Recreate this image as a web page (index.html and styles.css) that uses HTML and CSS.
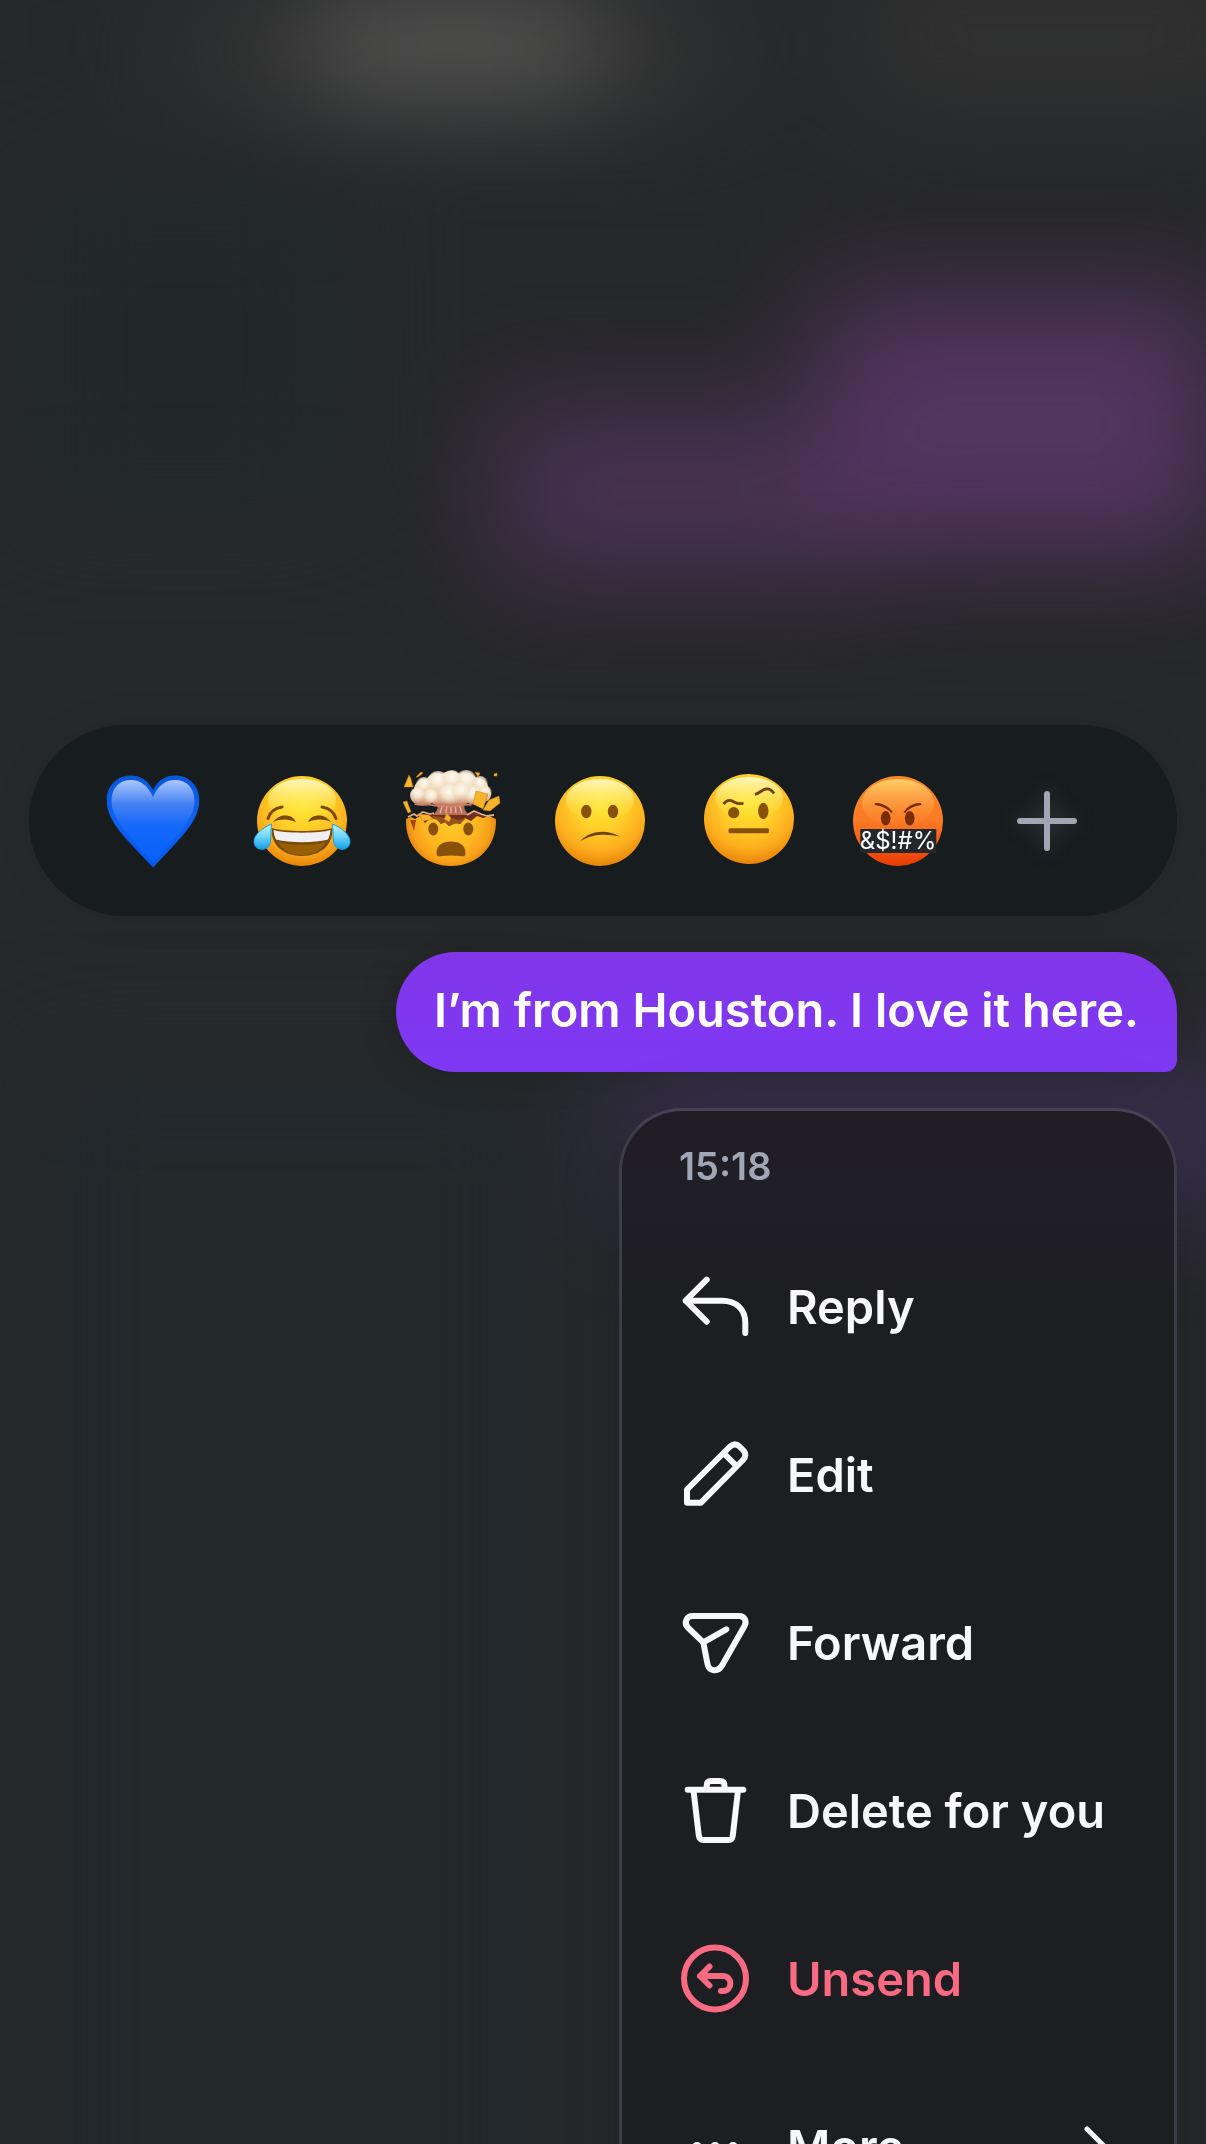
FILE: index.html
```html
<!DOCTYPE html>
<html lang="en">
<head>
    <meta charset="UTF-8">
    <meta name="viewport" content="width=device-width, initial-scale=1.0">
    <title>Message actions</title>
    <link rel="stylesheet" href="styles.css">
</head>
<body>
    <!-- Blurred chat behind the menu -->
    <svg class="backdrop" viewBox="0 0 1206 2144" preserveAspectRatio="none" aria-hidden="true">
        <defs>
            <filter id="soft" filterUnits="userSpaceOnUse" x="-300" y="-300" width="1806" height="2744" color-interpolation-filters="sRGB">
                <feGaussianBlur stdDeviation="54"/>
            </filter>
        </defs>
        <g filter="url(#soft)">
            <rect x="20" y="180" width="330" height="330" fill="#22282a"/>
            <rect x="30" y="1060" width="520" height="1300" fill="#23282b"/>
            <rect x="160" y="0" width="580" height="100" fill="#323232"/>
            <rect x="310" y="-10" width="290" height="110" fill="#575755"/>
            <rect x="860" y="-40" width="400" height="150" fill="#313131"/>
            <rect x="500" y="412" width="370" height="160" fill="#493254"/>
            <rect x="825" y="300" width="390" height="250" fill="#543461"/>
            <rect x="620" y="1070" width="640" height="130" fill="#3a3154"/>
        </g>
    </svg>

    <!-- Gradients shared by the emoji -->
    <svg class="defs" width="0" height="0" aria-hidden="true">
        <defs>
            <radialGradient id="face" cx="0.5" cy="0.3" r="0.7">
                <stop offset="0" stop-color="#ffe52e"/>
                <stop offset="0.4" stop-color="#ffd02a"/>
                <stop offset="0.75" stop-color="#fdae1d"/>
                <stop offset="1" stop-color="#e8850a"/>
            </radialGradient>
            <linearGradient id="shine" x1="0" y1="0" x2="0" y2="1">
                <stop offset="0" stop-color="#fffbd0" stop-opacity="0.9"/>
                <stop offset="1" stop-color="#ffee40" stop-opacity="0"/>
            </linearGradient>
            <radialGradient id="bowl" gradientUnits="userSpaceOnUse" cx="48" cy="50" r="46">
                <stop offset="0" stop-color="#ffc928"/>
                <stop offset="0.6" stop-color="#fdb520"/>
                <stop offset="0.85" stop-color="#f8a019"/>
                <stop offset="1" stop-color="#e5850f"/>
            </radialGradient>
            <linearGradient id="heartFill" x1="0" y1="0" x2="0" y2="1">
                <stop offset="0" stop-color="#0b57dc"/>
                <stop offset="0.5" stop-color="#0d60f2"/>
                <stop offset="1" stop-color="#0557ee"/>
            </linearGradient>
            <linearGradient id="heartShine" x1="0" y1="0" x2="0" y2="1">
                <stop offset="0" stop-color="#a9c8fb"/>
                <stop offset="0.3" stop-color="#437ff4"/>
                <stop offset="0.55" stop-color="#1569fb"/>
                <stop offset="1" stop-color="#0560fb"/>
            </linearGradient>
            <linearGradient id="tear" x1="0" y1="0" x2="0" y2="1">
                <stop offset="0" stop-color="#c9f3ff"/>
                <stop offset="0.5" stop-color="#6bd5fb"/>
                <stop offset="1" stop-color="#149fe8"/>
            </linearGradient>
            <linearGradient id="anger" x1="0" y1="0" x2="0" y2="1">
                <stop offset="0" stop-color="#f98a2b"/>
                <stop offset="0.5" stop-color="#fa7a25"/>
                <stop offset="1" stop-color="#e93c02"/>
            </linearGradient>
            <linearGradient id="angerShine" x1="0" y1="0" x2="0" y2="1">
                <stop offset="0" stop-color="#ffcf6a"/>
                <stop offset="1" stop-color="#ff9035" stop-opacity="0"/>
            </linearGradient>
            <linearGradient id="cloud" x1="0" y1="0" x2="0" y2="1">
                <stop offset="0" stop-color="#f6ead6"/>
                <stop offset="0.6" stop-color="#eed6b8"/>
                <stop offset="0.85" stop-color="#d9a78c"/>
                <stop offset="1" stop-color="#b9664c"/>
            </linearGradient>
            <radialGradient id="puff" cx="0.5" cy="0.35" r="0.6">
                <stop offset="0" stop-color="#fffaf0"/>
                <stop offset="0.5" stop-color="#f8ecd8" stop-opacity="0.8"/>
                <stop offset="1" stop-color="#e9cfae" stop-opacity="0"/>
            </radialGradient>
        </defs>
    </svg>

    <main class="overlay">
        <div class="reactions">
            <button type="button" aria-label="Blue heart">
                <svg class="emoji" viewBox="0 0 96 96">
                    <path fill="url(#heartFill)" d="M48 17C43 7 35 2.500 26 2.500C12 2.500 1.700 13 1.700 27C1.700 44 14 58 25 70C33 79 41 87 48 94.500C55 87 63 79 71 70C82 58 94.300 44 94.300 27C94.300 13 84 2.500 70 2.500C61 2.500 53 7 48 17Z"/>
                    <path fill="url(#heartShine)" d="M48 24C43 13 36 7 26 7C14 7 6.500 15 6.500 28C6.500 45 22 61 48 90C74 61 89.500 45 89.500 28C89.500 15 82 7 70 7C60 7 53 13 48 24Z"/>
                </svg>
            </button>
            <button type="button" aria-label="Tears of joy">
                <svg class="emoji" viewBox="0 0 96 96">
                    <circle cx="48" cy="48" r="45" fill="url(#face)"/>
                    <ellipse cx="48" cy="27" rx="34" ry="21" fill="url(#shine)"/>
                    <g fill="none" stroke="#7b4a06" stroke-width="3" stroke-linecap="round">
                        <path d="M14 45.500C16 39 21 35 28 34"/>
                        <path d="M82 45.500C80 39 75 35 68 34"/>
                    </g>
                    <g fill="#7b4a06">
                        <path d="M19 49C23 44 27 42.500 31 42.500C36 42.500 40 44.500 42 49C35 46 27 45.500 19 49Z"/>
                        <path d="M77 49C73 44 69 42.500 65 42.500C60 42.500 56 44.500 54 49C61 46 69 45.500 77 49Z"/>
                        <path d="M18 55C27 59 69 59 78 55C80 72 66 83 48 83C30 83 16 72 18 55Z"/>
                    </g>
                    <path fill="#995f07" d="M24 69C38 73 58 73 72 69C67 78 59 82 48 82C37 82 29 78 24 69Z"/>
                    <path fill="#f0eff3" d="M19.500 57C29 60.500 67 60.500 76.500 57C76 62 75 65 74 66.500C60 70 36 70 22 66.500C21 65 20 62 19.500 57Z"/>
                    <path fill="url(#tear)" stroke="#1c9fdd" stroke-width="1" d="M17.500 51C8 55 0 62 0 68.500C0 79 16 79 16.500 68C17 61 17 56 17.500 51Z"/>
                    <path fill="url(#tear)" stroke="#1c9fdd" stroke-width="1" d="M78.500 51C88 55 96 62 96 68.500C96 79 80 79 79.500 68C79 61 79 56 78.500 51Z"/>
                </svg>
            </button>
            <button type="button" aria-label="Exploding head">
                <svg class="emoji" viewBox="0 0 96 96">
                    <path fill="#6e2f1c" d="M14 45L24 40L34 42L62 42L72 38L84 44L70 52L26 52Z"/>
                    <path fill="#b9705a" d="M33 28H63C60 34 61 37 66 42H30C35 37 36 34 33 28Z"/>
                    <g stroke="#e9ae97" stroke-width="1.500">
                        <path d="M40 31L37 40M44 31L43 40M48 31V40M52 31L53 40M56 31L59 40"/>
                    </g>
                    <path fill="url(#bowl)" d="M3 46L8 44L12 46L17 43L22 50L28 44L34 46L38 51L42 49L46 53L52 50L57 51L62 45L68 48L74 43L80 45L86 43L93 46C94 74 74 93 48 93C22 93 2 74 3 46Z"/>
                    <path fill="none" stroke="#e3ac8c" stroke-width="1.800" stroke-linejoin="round" d="M5 44L11 41L14 43L20 39L27 41L31 40M64 42L71 38L78 41L84 43L91 42"/>
                    <path fill="#a04713" d="M7 47L13 47L11 58L9 52Z"/>
                    <path fill="#94521c" d="M22 50L28 45L34 47L38 51L42 49L46 53L54 50L57 51L63 45L55 47L50 45L45 47L38 44L30 43Z"/>
                    <path fill="url(#cloud)" d="M14 31C6 29 5 19 11 16C12 8 19 5 24 6C27 0 35 -1 39 1C44 -3 52 -3 56 1C62 -2 70 0 73 5C80 5 85 9 85 14C90 19 89 28 81 29C76 33 68 32 65 30C58 34 50 34 44 32C38 34 32 33 29 30C25 33 18 33 14 31Z"/>
                    <g fill="url(#puff)">
                        <circle cx="15" cy="22" r="8"/>
                        <circle cx="81" cy="20" r="8"/>
                        <circle cx="28" cy="24" r="8"/>
                        <circle cx="70" cy="22" r="10"/>
                        <circle cx="21" cy="12" r="8"/>
                        <circle cx="77" cy="11" r="8"/>
                        <circle cx="35" cy="9" r="11"/>
                        <circle cx="63" cy="8" r="11"/>
                        <circle cx="49" cy="7" r="10"/>
                        <circle cx="46" cy="22" r="11"/>
                        <circle cx="58" cy="19" r="10"/>
                    </g>
                    <path fill="none" stroke="#d08169" stroke-width="1.500" stroke-linecap="round" d="M12 31C18 33 24 31 29 32C34 34 40 32 45 33C53 34 60 31 68 32"/>
                    <g fill="#f6b42b" stroke="#c97812" stroke-width="0.500">
                        <path d="M6 2L8 6L10 14L1 14Z"/>
                        <path d="M13 4L18 -1L20 0L15 4Z"/>
                        <path d="M72 -1L77 0L75 4Z"/>
                        <path d="M91 1L94 0L94 3L91 3Z"/>
                        <path d="M73 18L85 21L80 36L70 31Z"/>
                        <path d="M86 27L96 23L97 30L87 38L80 37Z"/>
                        <path d="M0 29L4 28L8 39L5 40Z"/>
                        <path d="M44 40L48 45L46 49L41 46Z"/>
                        <path d="M15 41L26 42L30 46L20 48Z"/>
                    </g>
                    <g fill="#885109">
                        <ellipse cx="30.300" cy="56" rx="5" ry="6.500"/>
                        <ellipse cx="65.300" cy="56" rx="5" ry="6.500"/>
                        <path d="M33.500 80C33.500 72 40 68.500 48 68.500C56 68.500 62.500 72 62.500 80C62.500 84 60 83.500 57 83C51 82.300 45 82.300 39 83C36 83.500 33.500 84 33.500 80Z"/>
                    </g>
                </svg>
            </button>
            <button type="button" aria-label="Confused face">
                <svg class="emoji" viewBox="0 0 96 96">
                    <circle cx="48" cy="48" r="45" fill="url(#face)"/>
                    <ellipse cx="48" cy="27" rx="34" ry="21" fill="url(#shine)"/>
                    <g fill="#885109">
                        <ellipse cx="34.300" cy="38.500" rx="5.200" ry="6.700"/>
                        <ellipse cx="61" cy="38.500" rx="5.200" ry="6.700"/>
                    </g>
                    <path fill="#70430a" d="M28.500 68C38 57.500 55 56 68 63.500C54 60.500 41 60.500 28.500 68Z"/>
                </svg>
            </button>
            <button type="button" aria-label="Raised eyebrow">
                <svg class="emoji" viewBox="0 2 96 96">
                    <circle cx="48" cy="48" r="45" fill="url(#face)"/>
                    <ellipse cx="48" cy="27" rx="34" ry="21" fill="url(#shine)"/>
                    <g fill="#885109">
                        <circle cx="32.700" cy="41.700" r="5.600"/>
                        <ellipse cx="62.300" cy="40" rx="5.200" ry="8.200"/>
                        <rect x="27.500" y="57.300" width="40.500" height="5" rx="1.500"/>
                    </g>
                    <g fill="none" stroke="#70430a" stroke-width="2.800" stroke-linejoin="round">
                        <path d="M22.500 33C27 28 30 29 34 31.500C37 33 39 32.500 42.500 32.500"/>
                        <path d="M54 23.500C59 22 61 18.500 65 18C69 17.500 71 19.500 73 22.500"/>
                    </g>
                </svg>
            </button>
            <button type="button" aria-label="Cursing face">
                <svg class="emoji" viewBox="0 0 96 96">
                    <circle cx="48" cy="48" r="45" fill="url(#anger)"/>
                    <ellipse cx="48" cy="30" rx="36" ry="24" fill="url(#angerShine)"/>
                    <g fill="#7a2c05">
                        <ellipse cx="35.700" cy="45.300" rx="4.800" ry="7.300"/>
                        <ellipse cx="59.700" cy="45.300" rx="4.800" ry="7.300"/>
                        <path d="M24 31.500C27 28 37 32 42.500 40C37 36 32 33 24 31.500Z"/>
                        <path d="M72 31.500C69 28 59 32 53.500 40C59 36 64 33 72 31.500Z"/>
                    </g>
                    <g fill="none" stroke="#7a2c05" stroke-width="2">
                        <path d="M25 31C33 31 38 34 42 39.500"/>
                        <path d="M71 31C63 31 58 34 54.500 39.500"/>
                    </g>
                    <rect x="10.300" y="56" width="76" height="24" rx="1" fill="#26272a"/>
                    <text class="curse" x="48" y="76" text-anchor="middle">&amp;$!#%</text>
                </svg>
            </button>
            <button type="button" aria-label="More reactions">
                <svg class="plus" viewBox="0 0 60 60">
                    <path d="M30 3V57M3 30H57"/>
                </svg>
            </button>
        </div>

        <p class="bubble">I’m from Houston. I love it here.</p>

        <div class="menu">
            <time class="menu-time" datetime="15:18">15:18</time>
            <ul class="menu-list">
                <li>
                    <button type="button" class="menu-item">
                        <svg class="icon" viewBox="0 0 72 72">
                            <path d="M27.700 8.700L6.700 29.700L27.700 50.700M6.700 29.700H43C57 29.700 66.300 38 66.300 52V62"/>
                        </svg>
                        <span>Reply</span>
                    </button>
                </li>
                <li>
                    <button type="button" class="menu-item">
                        <svg class="icon" viewBox="0 0 72 72">
                            <path d="M8 63.700V50.500L50.500 8C54 4.700 57.500 4.700 60.500 7.500L64.500 11.500C67 14.500 67 18 64 21L22 63.700ZM46 15.500L56.500 26"/>
                        </svg>
                        <span>Edit</span>
                    </button>
                </li>
                <li>
                    <button type="button" class="menu-item">
                        <svg class="icon" viewBox="0 0 72 72">
                            <path d="M13.500 9H60C66 9 68 14.500 65.500 19L43 58.500C39 65.500 30 64.500 28.500 57L24.300 35.300L8.800 20.500C4.500 16 7.500 9 13.500 9ZM24.300 35.300L47.300 22.300"/>
                        </svg>
                        <span>Forward</span>
                    </button>
                </li>
                <li>
                    <button type="button" class="menu-item">
                        <svg class="icon" viewBox="0 0 72 72">
                            <path d="M8.700 14.700H64.300M27.700 14.700V10.500C27.700 7.500 29 6 32 6H41C44 6 45.500 7.500 45.500 10.500V14.700M14.500 15.500L19.800 60.500C20.200 63.500 21.500 65 24.500 65H49.500C52.500 65 53.500 63.500 53.800 60.500L59 15.500"/>
                        </svg>
                        <span>Delete for you</span>
                    </button>
                </li>
                <li>
                    <button type="button" class="menu-item danger">
                        <svg class="icon" viewBox="0 0 72 72">
                            <circle cx="36" cy="35.500" r="31"/>
                            <path d="M30.500 23.500L21 33L30.500 42.500M21 33H43.500C54 33 54 48 43.500 48H42"/>
                        </svg>
                        <span>Unsend</span>
                    </button>
                </li>
                <li>
                    <button type="button" class="menu-item">
                        <svg class="icon dots" viewBox="0 0 72 72">
                            <circle cx="18" cy="36" r="5"/>
                            <circle cx="36" cy="36" r="5"/>
                            <circle cx="54" cy="36" r="5"/>
                        </svg>
                        <span>More</span>
                        <svg class="chevron" viewBox="0 0 24 42">
                            <path d="M3 3L21 21L3 39"/>
                        </svg>
                    </button>
                </li>
            </ul>
        </div>
    </main>
</body>
</html>
```
FILE: styles.css
```css
* {
    margin: 0;
    padding: 0;
    box-sizing: border-box;
}

body {
    height: 100vh;
    overflow: hidden;
    font-family: Inter, "Liberation Sans", sans-serif;
    color: #f8f8fa;
    background-color: #27282a;
}

button {
    border: none;
    background: none;
    color: inherit;
    font: inherit;
    cursor: pointer;
}

svg {
    display: block;
    overflow: visible;
    flex-shrink: 0;
}

.backdrop {
    position: fixed;
    inset: 0;
    z-index: -1;
    width: 100%;
    height: 100%;
}

.defs {
    position: absolute;
}

.overlay {
    display: flex;
    flex-direction: column;
    align-items: flex-end;
    gap: 36px;
    padding: 725px 29px 0;
}

.reactions {
    display: grid;
    grid-template-columns: repeat(7, 1fr);
    width: 100%;
    height: 191px;
    padding: 0 56px 0 50px;
    border-radius: 96px;
    background-color: #171c1e;
    box-shadow: 0 0 40px rgba(0, 0, 0, 0.08);
}

.reactions button {
    display: flex;
    align-items: center;
    justify-content: center;
}

.emoji {
    width: 96px;
    height: 96px;
}

.curse {
    font-size: 24px;
    font-weight: 400;
    fill: #fff;
}

.plus {
    width: 60px;
    height: 60px;
    fill: none;
    stroke: #a2a5b4;
    stroke-width: 6;
    stroke-linecap: round;
    filter: drop-shadow(0 0 10px rgba(162, 165, 180, 0.25));
}

.bubble {
    padding: 28px 38px 32px;
    border-radius: 60px 60px 12px 60px;
    background: linear-gradient(#8136e8, #7e38f4);
    box-shadow: 0 0 40px rgba(0, 0, 0, 0.15);
    font-size: 47px;
    font-weight: 600;
    line-height: 60px;
    color: #fff;
}

.menu {
    width: 558px;
    max-width: 100%;
    padding: 36px 57px;
    border: 3px solid #3c3d45;
    border-top-color: #444253;
    border-radius: 63px;
    background: linear-gradient(#1f1c26 0, #201e27 90px, #1d1e21 200px);
    box-shadow: 0 0 60px rgba(0, 0, 0, 0.15);
}

.menu-time {
    display: block;
    height: 76px;
    font-size: 38px;
    font-weight: 600;
    line-height: 38px;
    color: #a2a5b4;
}

.menu-list {
    list-style: none;
}

.menu-item {
    display: flex;
    align-items: center;
    gap: 36px;
    width: 100%;
    height: 168px;
    font-size: 47px;
    font-weight: 600;
    white-space: nowrap;
}

.menu-item span {
    padding-bottom: 2px;
}

.danger {
    color: #fa6a82;
}

.icon {
    width: 72px;
    height: 72px;
    fill: none;
    stroke: currentColor;
    stroke-width: 6;
    stroke-linecap: round;
    stroke-linejoin: round;
}

.dots {
    fill: currentColor;
    stroke: none;
}

.chevron {
    width: 24px;
    height: 42px;
    margin-left: auto;
    margin-right: 9px;
    fill: none;
    stroke: currentColor;
    stroke-width: 5;
    stroke-linecap: round;
    stroke-linejoin: round;
}
```
